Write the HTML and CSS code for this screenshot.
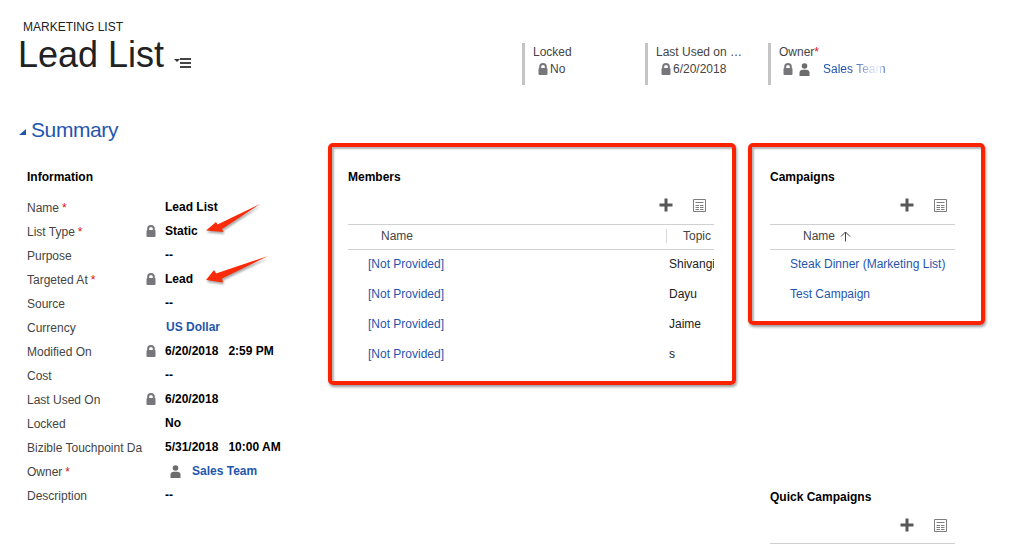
FILE: index.html
```html
<!DOCTYPE html>
<html lang="en">
<head>
    <meta charset="UTF-8">
    <meta name="viewport" content="width=device-width, initial-scale=1.0">
    <title>Lead List</title>
    <link rel="stylesheet" href="styles.css">
</head>
<body>
    <svg class="defs" width="0" height="0">
        <symbol id="lock" viewBox="0 0 10 12">
            <path d="M2.200 5.500V3.600C2.200 1.900 3.200 1 5 1s2.800 .9 2.800 2.600v1.900" fill="none" stroke="currentColor" stroke-width="2"/>
            <rect x="0.500" y="5" width="9" height="7" rx="1" fill="currentColor"/>
        </symbol>
        <symbol id="person" viewBox="0 0 11 13">
            <circle cx="5.500" cy="3" r="2.800" fill="currentColor"/>
            <path d="M0.500 13V9.600C0.500 7.800 2 6.900 3.600 6.700h3.800c1.600.2 3.100 1.100 3.100 2.900V13z" fill="currentColor"/>
        </symbol>
        <symbol id="plus" viewBox="0 0 14 14">
            <path d="M7 0.500v13M0.500 7h13" stroke="currentColor" stroke-width="3" fill="none"/>
        </symbol>
        <symbol id="grid" viewBox="0 0 13 13">
            <path d="M.5.5h12v12H.5zM2.500 3.500h8M2.500 6.500h3.500M7 6.500h3.500M2.500 8.500h3.500M7 8.500h3.500M2.500 10.500h3.500M7 10.500h3.500" fill="none" stroke="currentColor"/>
        </symbol>
    </svg>

    <header class="top">
        <div class="title-block">
            <div class="entity">MARKETING LIST</div>
            <div class="title-row">
                <h1>Lead List</h1>
                <span class="title-menu"><i class="caret"></i><i class="bars"></i></span>
            </div>
        </div>
        <div class="head-fields">
            <div class="head-field">
                <div class="head-label">Locked</div>
                <div class="head-value indent"><svg class="ico-lock"><use href="#lock"/></svg>No</div>
            </div>
            <div class="head-field">
                <div class="head-label">Last Used on …</div>
                <div class="head-value indent"><svg class="ico-lock"><use href="#lock"/></svg>6/20/2018</div>
            </div>
            <div class="head-field">
                <div class="head-label">Owner<span class="req-tight">*</span></div>
                <div class="head-value owner">
                    <svg class="ico-lock"><use href="#lock"/></svg>
                    <svg class="ico-person"><use href="#person"/></svg>
                    <span class="fade-link">Sales Team</span>
                </div>
            </div>
        </div>
    </header>

    <h2 class="section"><i class="section-tri"></i>Summary</h2>

    <main class="columns">
        <section class="info">
            <h3>Information</h3>
            <div class="row"><span class="lbl">Name<b class="req">*</b></span><span class="lockcell"></span><span class="val">Lead List</span></div>
            <div class="row"><span class="lbl">List Type<b class="req">*</b></span><span class="lockcell"><svg class="ico-lock"><use href="#lock"/></svg></span><span class="val">Static</span></div>
            <div class="row"><span class="lbl">Purpose</span><span class="lockcell"></span><span class="val">--</span></div>
            <div class="row"><span class="lbl">Targeted At<b class="req">*</b></span><span class="lockcell"><svg class="ico-lock"><use href="#lock"/></svg></span><span class="val">Lead</span></div>
            <div class="row"><span class="lbl">Source</span><span class="lockcell"></span><span class="val">--</span></div>
            <div class="row"><span class="lbl">Currency</span><span class="lockcell"></span><span class="val link">US Dollar</span></div>
            <div class="row"><span class="lbl">Modified On</span><span class="lockcell"><svg class="ico-lock"><use href="#lock"/></svg></span><span class="val">6/20/2018 &nbsp; 2:59 PM</span></div>
            <div class="row"><span class="lbl">Cost</span><span class="lockcell"></span><span class="val">--</span></div>
            <div class="row"><span class="lbl">Last Used On</span><span class="lockcell"><svg class="ico-lock"><use href="#lock"/></svg></span><span class="val">6/20/2018</span></div>
            <div class="row"><span class="lbl">Locked</span><span class="lockcell"></span><span class="val">No</span></div>
            <div class="row"><span class="lbl">Bizible Touchpoint Da</span><span class="lockcell"></span><span class="val">5/31/2018 &nbsp; 10:00 AM</span></div>
            <div class="row"><span class="lbl">Owner<b class="req">*</b></span><span class="lockcell"></span><span class="val link owner-val"><svg class="ico-person"><use href="#person"/></svg>Sales Team</span></div>
            <div class="row"><span class="lbl">Description</span><span class="lockcell"></span><span class="val">--</span></div>
        </section>

        <section class="panel members">
            <h3>Members</h3>
            <div class="tools">
                <svg class="ico-plus"><use href="#plus"/></svg>
                <svg class="ico-grid"><use href="#grid"/></svg>
            </div>
            <div class="thead">
                <span class="th-name">Name</span>
                <span class="th-topic">Topic</span>
            </div>
            <div class="trow"><a class="cell-name">[Not Provided]</a><span class="cell-topic">Shivangi</span></div>
            <div class="trow"><a class="cell-name">[Not Provided]</a><span class="cell-topic">Dayu</span></div>
            <div class="trow"><a class="cell-name">[Not Provided]</a><span class="cell-topic">Jaime</span></div>
            <div class="trow"><a class="cell-name">[Not Provided]</a><span class="cell-topic">s</span></div>
        </section>

        <div class="side">
            <section class="panel campaigns">
                <h3>Campaigns</h3>
                <div class="tools">
                    <svg class="ico-plus"><use href="#plus"/></svg>
                    <svg class="ico-grid"><use href="#grid"/></svg>
                </div>
                <div class="thead">
                    <span class="th-name">Name</span>
                    <svg class="sort-up" viewBox="0 0 11 11"><path d="M5.500 10.500V1M1 5.500L5.500 1 10 5.500" fill="none" stroke="currentColor"/></svg>
                </div>
                <div class="trow"><a class="cell-name">Steak Dinner (Marketing List)</a></div>
                <div class="trow"><a class="cell-name">Test Campaign</a></div>
            </section>

            <section class="quick">
                <h3>Quick Campaigns</h3>
                <div class="tools">
                    <svg class="ico-plus"><use href="#plus"/></svg>
                    <svg class="ico-grid"><use href="#grid"/></svg>
                </div>
                <div class="quick-line"></div>
            </section>
        </div>
    </main>

    <!-- annotation arrows drawn over the form -->
    <svg class="arrows" width="1014" height="545" viewBox="0 0 1014 545">
        <path d="M206 230.500L216 222l1.500 2.500L260 204l-38 25 1.500 3z"/>
        <path d="M206 280L214 270l2 3.500L268 256l-46 22.500 1 4z"/>
    </svg>
</body>
</html>
```

FILE: styles.css
```css
html, body {
    margin: 0;
    padding: 0;
}
body {
    width: 1014px;
    height: 545px;
    overflow: hidden;
    position: relative;
    background-color: #ffffff;
    color: #444444;
    font-family: 'Liberation Sans', Arial, sans-serif;
    font-size: 12px;
}
.defs {
    position: absolute;
}
h1, h2, h3 {
    margin: 0;
}
svg {
    display: block;
    flex: none;
}
.ico-lock {
    width: 10px;
    height: 12px;
    color: #77777b;
}
.ico-person {
    width: 11px;
    height: 13px;
    color: #6c6c6c;
}
.ico-plus {
    width: 14px;
    height: 14px;
    color: #585858;
}
.ico-grid {
    width: 13px;
    height: 13px;
    color: #7d7d7d;
}

/* header */
.top {
    display: flex;
    height: 85px;
}
.title-block {
    width: 522px;
    padding: 20px 0 0 18px;
    box-sizing: border-box;
}
.entity {
    margin-left: 5px;
    line-height: 14px;
    color: #222222;
}
.title-row {
    display: flex;
    align-items: flex-end;
    height: 42px;
}
h1 {
    font-size: 36px;
    font-weight: normal;
    line-height: 42px;
    color: #222222;
}
.title-menu {
    display: flex;
    margin: 0 0 7px 10px;
    height: 11px;
}
.caret {
    width: 0;
    height: 0;
    margin-top: 1px;
    border: 3px solid transparent;
    border-top: 3px solid #333333;
    border-bottom: 0;
}
.bars {
    width: 11px;
    height: 10px;
    background: linear-gradient(#444444 2px, transparent 2px, transparent 4px, #444444 4px, #444444 6px, transparent 6px, transparent 8px, #444444 8px);
}
.head-fields {
    display: flex;
    margin-top: 43px;
    height: 42px;
}
.head-field {
    width: 123px;
    box-sizing: border-box;
    border-left: 3px solid #c4c4c4;
    padding: 2px 0 0 8px;
    line-height: 14px;
    color: #444444;
}
.head-value {
    display: flex;
    align-items: center;
    margin-top: 3px;
    height: 14px;
}
.indent {
    padding-left: 5px;
}
.indent .ico-lock {
    margin-right: 2px;
}
.owner {
    padding-left: 4px;
}
.owner .ico-person {
    margin-left: 6px;
}
.fade-link {
    margin-left: 13px;
    width: 64px;
    overflow: hidden;
    white-space: nowrap;
    color: #1f56ad;
    -webkit-mask-image: linear-gradient(to right, #000 45%, rgba(0, 0, 0, 0.25) 75%, rgba(0, 0, 0, 0.1) 88%, #000 98%);
    mask-image: linear-gradient(to right, #000 45%, rgba(0, 0, 0, 0.25) 75%, rgba(0, 0, 0, 0.1) 88%, #000 98%);
}
.req-tight {
    color: #e01010;
}

/* section title */
.section {
    display: flex;
    align-items: center;
    height: 28px;
    margin-top: 31px;
    padding-left: 19px;
    font-size: 21px;
    letter-spacing: -0.4px;
    font-weight: normal;
    color: #1f56ad;
}
.section-tri {
    width: 0;
    height: 0;
    margin: 3px 5px 0 0;
    border-left: 7px solid transparent;
    border-bottom: 6px solid #1f56ad;
}

/* columns */
.columns {
    display: flex;
    align-items: flex-start;
    margin-top: -1px;
}
h3 {
    font-size: 12px;
    line-height: 14px;
    color: #000000;
}

/* information form */
.info {
    width: 328px;
    box-sizing: border-box;
    padding: 27px 0 0 27px;
    flex: none;
}
.info h3 {
    margin-bottom: 11px;
}
.row {
    display: flex;
    align-items: center;
    height: 24px;
}
.lbl {
    width: 119px;
    flex: none;
    padding-top: 2px;
    white-space: nowrap;
    overflow: hidden;
}
.req {
    margin-left: 3px;
    font-weight: normal;
    color: #e01010;
}
.lockcell {
    width: 19px;
    flex: none;
}
.val {
    display: flex;
    align-items: center;
    font-weight: bold;
    color: #000000;
    white-space: pre;
}
.val.link {
    color: #1f56ad;
    margin-left: 1px;
}
.val.owner-val {
    margin-left: 5px;
}
.owner-val .ico-person {
    margin-right: 11px;
}

/* red boxed panels */
.panel {
    box-sizing: border-box;
    flex: none;
    border: 4px solid #fb2200;
    border-radius: 5px;
    box-shadow: 1px 2px 3px rgba(0, 0, 0, 0.4), inset 2px 2px 2px rgba(0, 0, 0, 0.3);
}
.members {
    width: 408px;
    height: 242px;
    padding: 23px 18px 0 16px;
    overflow: hidden;
}
.tools {
    display: flex;
    justify-content: flex-end;
    align-items: center;
    gap: 20px;
    height: 14px;
    margin-top: 14px;
    padding-right: 8px;
}
.thead {
    display: flex;
    align-items: center;
    height: 22px;
    margin: 12px 0 -1px;
    padding-bottom: 2px;
    border-top: 1px solid #d0d0d0;
    border-bottom: 1px solid #d0d0d0;
    color: #444444;
}
.th-name {
    margin-left: 33px;
}
.th-topic {
    margin-left: auto;
    width: 48px;
    box-sizing: border-box;
    height: 14px;
    line-height: 14px;
    padding-left: 16px;
    border-left: 1px solid #d8d8d8;
}
.trow {
    display: flex;
    align-items: center;
    height: 30px;
}
.cell-name {
    margin-left: 20px;
    color: #1f56ad;
    white-space: nowrap;
}
.cell-topic {
    margin-left: auto;
    width: 45px;
    overflow: hidden;
    color: #222222;
}

/* right column */
.side {
    flex: none;
    width: 237px;
    margin-left: 12px;
}
.campaigns {
    height: 182px;
    padding: 23px 26px 0 18px;
}
.sort-up {
    width: 11px;
    height: 11px;
    margin-left: 5px;
    color: #444444;
}
.quick {
    margin-top: 165px;
    padding: 0 30px 0 22px;
}
.quick-line {
    margin-top: 11px;
    border-top: 1px solid #d0d0d0;
}

/* annotation arrows */
.arrows {
    position: absolute;
    left: 0;
    top: 0;
    fill: #fb2a08;
    filter: drop-shadow(1px 2px 1px rgba(0, 0, 0, 0.35));
}
```
